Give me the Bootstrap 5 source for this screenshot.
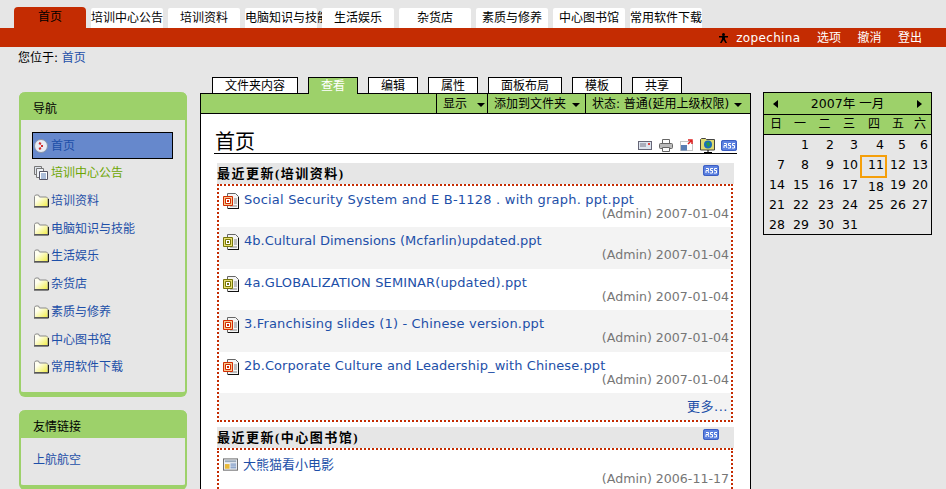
<!DOCTYPE html>
<html lang="en">
<head>
<meta charset="UTF-8" />
<title>首页</title>
<link href="https://cdn.jsdelivr.net/npm/bootstrap@5.3.0/dist/css/bootstrap.min.css" rel="stylesheet" />
<style>
html, body { height: 489px; overflow: hidden; }
body { background: #e6e6e6; color: #000; font: 13px/14px "DejaVu Sans", "Noto Sans CJK SC", sans-serif; }
a { color: #1d4fa8; text-decoration: none; }
svg { display: block; flex: none; }

.site-tabs { padding: 7px 0 0 14px; gap: 5px; height: 28px; align-items: flex-end; }
.site-tab { position: relative; width: 72px; height: 20px; background: #fff; color: #000; text-align: center; white-space: nowrap; line-height: 21px; font-size: 12px; border-radius: 2px 2px 0 0; }
.site-tab.on { height: 21px; background: #c42c02; border-radius: 4px 4px 0 0; }
.red-bar { height: 19px; background: #c42c02; padding-right: 24px; gap: 16.5px; align-items: center; color: #fff; }
.red-bar a { color: #fff; font-size: 12px; }
.red-bar a.user-name { letter-spacing: .35px; }
.crumb { height: 30px; padding: 4px 0 0 18px; font-size: 12px; }

.main-wrap { padding-left: 19px; align-items: flex-start; }
.left-col { width: 168px; margin-top: 15px; margin-right: 13px; flex: none; }
.side-box { border: 2px solid #9dd16a; border-top: 0; border-bottom-width: 5px; border-radius: 6px; background: #e6e6e6; margin-bottom: 13px; }
.side-head { height: 28px; background: #9dd16a; margin: 0 -2px; padding: 10px 0 0 14px; border-radius: 6px 6px 0 0; font-size: 12px; }
.side-body { padding: 12px 12px 10.5px 11px; }
.side-link { height: 27.75px; display: flex; align-items: center; gap: 2px; font-size: 12px; border: 1px solid transparent; }
.side-link.sel { background: #6688cc; border-color: #000; height: 27px; margin-bottom: .25px; }
.side-link.cur { color: #6ba500; }
.friend { padding: 15px 12px 18px; font-size: 12px; }
.stray { margin-left: 76px; margin-top: -13px; }

.mid-col { width: 551px; flex: none; margin-right: 12px; }
.view-tabs { padding-left: 12px; gap: 10px; height: 16px; position: relative; z-index: 1; }
.view-tab { height: 16px; border: 1px solid #000; border-bottom: 0; background: #fff; font-size: 12px; line-height: 16px; text-align: center; color: #000; }
.view-tab.on { background: #9dd16a; color: #fff; height: 17px; }
.tab-a { width: 86px; } .tab-b { width: 50px; } .tab-c { width: 74px; }
.action-bar { height: 21px; background: #9dd16a; border: 1px solid #000; justify-content: flex-end; font-size: 12px; }
.action-item { border-left: 1px solid #000; display: flex; align-items: center; justify-content: space-between; color: #000; padding: 0 2px 0 6px; }
.act-a { width: 51px; }
.act-b { width: 98px; padding-right: 5px; }
.act-c { width: 165px; padding-right: 8px; }
.drop { width: 0; height: 0; border: 4px solid transparent; border-top-color: #000; border-bottom: 0; margin-top: 2px; }
.content-pane { background: #fff; border-left: 1px solid #000; border-right: 1px solid #000; padding: 16px 13px 0; height: 400px; }
.page-title { height: 24px; border-bottom: 1px solid #000; font-size: 20px; line-height: 24px; padding-left: 1px; margin-bottom: 9px; position: relative; }
.doc-tools { position: absolute; right: 0; bottom: 0; height: 16px; align-items: center; }
.doc-tools svg { margin-left: 7px; }
.doc-tools svg:last-child { margin-left: 5px; }
.sec-head { height: 21px; background: #e6e6e6; margin: 0 3px; font: bold 13px/21px "Liberation Serif", "Noto Sans CJK SC", serif; letter-spacing: 1.5px; position: relative; }
.sec-head svg { position: absolute; right: 15px; top: 2px; }
.sec-box { border: 2px dotted #c42c02; margin: 0 4px 5px 3px; }
.feed-row { height: 41.4px; padding: 7px 2px 0 4px; }
.feed-row:nth-child(even) { background: #f3f3f3; }
.feed-row.first-low { padding-top: 8px; }
.feed-line { gap: 5px; height: 14px; align-items: flex-start; }
.feed-date { color: #767676; text-align: right; font-size: 12.6px; }
.ls-a { letter-spacing: .21px; }
.ls-c { letter-spacing: .13px; }
.ls-d { letter-spacing: .17px; }
.ls-e { letter-spacing: .08px; }
.more-row { height: 27px; background: #f3f3f3; text-align: right; padding: 7px 3px 0 0; letter-spacing: .5px; }

.cal-col { width: 169px; margin-top: 15px; border: 1px solid #000; flex: none; }
.cal-top { height: 22px; background: #9dd16a; border-bottom: 1px solid #000; padding: 0 9px; align-items: center; justify-content: space-between; font-size: 12.500px; }
.cal-arrow-l { width: 0; height: 0; border: 4px solid transparent; border-left: 0; border-right: 5px solid #000; }
.cal-arrow-r { width: 0; height: 0; border: 4px solid transparent; border-right: 0; border-left: 5px solid #000; }
.cal-week, .cal-days { display: grid; grid-template-columns: 24px 24px 25px 24px 26px 22px 22px; }
.cal-week { height: 20px; background: #9dd16a; border-bottom: 1px solid #000; font-size: 12px; line-height: 19px; text-align: center; }
.cal-days { grid-auto-rows: 20px; height: 99px; font-size: 12.500px; }
.cal-day { text-align: right; line-height: 20px; padding-right: 3px; position: relative; }
.cal-day.today::before { content: ""; position: absolute; inset: 0 0 -3px -1px; border: 2px solid #f59f0a; }
.cal-day.low { padding-top: 2px; }
</style>
</head>
<body>
<svg width="0" height="0" class="position-absolute">
  <defs>
    <linearGradient id="fold-fill" x1="0" y1="0" x2="1" y2="1"><stop offset=".3" stop-color="#fffff0"/><stop offset="1" stop-color="#f0ec40"/></linearGradient>
  </defs>
  <symbol id="ic-folder" viewBox="0 0 16 14"><path d="M1.500 12.500V2.500l1-1.500h3l1 2h7l1.500 1.500v8z" fill="url(#fold-fill)" stroke="#8a8a8a"/><path d="M1 13h14.500M15.500 5v8" stroke="#222"/></symbol>
  <symbol id="ic-ppt" viewBox="0 0 16 16"><path d="M4.500.5h8l3 3v12h-11z" fill="#f4f4f4" stroke="#666"/><path d="M15.500 4v12M5 15.500h11" stroke="#111"/><path d="M11 6h3M11 8h3M11 10h3M7 13h7" stroke="#888"/><path d="M.5 3.500h9v9h-9z" fill="#f7c98e" stroke="#d22c02"/><path d="M2.500 5.500h5v5h-5z" fill="#fff" stroke="#d22c02"/><path d="M4 7h2v2H4z" fill="#d22c02"/></symbol>
  <symbol id="ic-pptg" viewBox="0 0 16 16"><path d="M4.500.5h8l3 3v12h-11z" fill="#f4f4f4" stroke="#666"/><path d="M15.500 4v12M5 15.500h11" stroke="#111"/><path d="M11 6h3M11 8h3M11 10h3M7 13h7" stroke="#888"/><path d="M.5 3.500h9v9h-9z" fill="#e8e070" stroke="#77760a"/><path d="M2.500 5.500h5v5h-5z" fill="#fff" stroke="#77760a"/><path d="M4 7h2v2H4z" fill="#77760a"/></symbol>
  <symbol id="ic-rss" viewBox="0 0 16 11"><rect width="16" height="11" rx="2" fill="#5b80e0"/><rect x=".5" y=".5" width="15" height="10" rx="2" fill="none" stroke="#3b5cc0"/><path d="M3 3.500h2.500v2H3v2.500M5 6l1 2M10 3.500H7.500v2h2v2.500H7M14 3.500h-2.500v2h2v2.500H11" fill="none" stroke="#fff"/></symbol>
</svg>

<div class="site-tabs d-flex">
  <a class="site-tab on" href="#">首页</a>
  <a class="site-tab" href="#">培训中心公告</a>
  <a class="site-tab" href="#">培训资料</a>
  <a class="site-tab" href="#">电脑知识与技能</a>
  <a class="site-tab" href="#">生活娱乐</a>
  <a class="site-tab" href="#">杂货店</a>
  <a class="site-tab" href="#">素质与修养</a>
  <a class="site-tab" href="#">中心图书馆</a>
  <a class="site-tab" href="#">常用软件下载</a>
</div>
<div class="red-bar d-flex justify-content-end">
  <span class="d-flex align-items-center gap-2">
    <svg width="9" height="10" viewBox="0 0 9 10"><circle cx="4.500" cy="1.500" r="1.500"/><path d="M0 3h9v1.500H6V6l2 4H6.500l-2-3-2 3H1l2-4V4.500H0z"/></svg>
    <a href="#" class="user-name">zopechina</a>
  </span>
  <a href="#">选项</a>
  <a href="#">撤消</a>
  <a href="#">登出</a>
</div>
<div class="crumb">您位于: <a href="#">首页</a></div>

<div class="main-wrap d-flex">
  <div class="left-col">
    <div class="side-box">
      <div class="side-head">导航</div>
      <div class="side-body">
        <a class="side-link sel" href="#"><svg width="16" height="16" viewBox="0 0 16 16"><circle cx="8" cy="8" r="6.500" fill="#e8edf5" stroke="#8a95a8"/><path d="M6 5l2 1M8 8l2 0M6 11l2-1" stroke="#d22c2c" stroke-width="2"/></svg>首页</a>
        <a class="side-link cur" href="#"><svg width="16" height="16" viewBox="0 0 16 16"><path d="M1.500 1.500h7v8h-7z" fill="#dfe4ec" stroke="#777"/><path d="M3.500 3.500h7v9h-7z" fill="#eef1f6" stroke="#777"/><path d="M6.500 6.500h8v8h-8z" fill="#fff" stroke="#556"/><path d="M8 9h5M8 11h5M8 13h5" stroke="#5a7fb5"/></svg>培训中心公告</a>
        <a class="side-link" href="#"><svg width="16" height="14"><use href="#ic-folder"/></svg>培训资料</a>
        <a class="side-link" href="#"><svg width="16" height="14"><use href="#ic-folder"/></svg>电脑知识与技能</a>
        <a class="side-link" href="#"><svg width="16" height="14"><use href="#ic-folder"/></svg>生活娱乐</a>
        <a class="side-link" href="#"><svg width="16" height="14"><use href="#ic-folder"/></svg>杂货店</a>
        <a class="side-link" href="#"><svg width="16" height="14"><use href="#ic-folder"/></svg>素质与修养</a>
        <a class="side-link" href="#"><svg width="16" height="14"><use href="#ic-folder"/></svg>中心图书馆</a>
        <a class="side-link" href="#"><svg width="16" height="14"><use href="#ic-folder"/></svg>常用软件下载</a>
      </div>
    </div>
    <div class="side-box">
      <div class="side-head">友情链接</div>
      <div class="friend"><a href="#">上航航空</a></div>
    </div>
    <svg class="stray" width="16" height="16" viewBox="0 0 16 16"><path d="M.5.5h11l3 3v12H.5z" fill="#fff" stroke="#555"/><path d="M2 3h8v3H2z" fill="#5a7fb5"/></svg>
  </div>

  <div class="mid-col">
    <div class="view-tabs d-flex">
      <a class="view-tab tab-a" href="#">文件夹内容</a>
      <a class="view-tab on tab-b" href="#">查看</a>
      <a class="view-tab tab-b" href="#">编辑</a>
      <a class="view-tab tab-b" href="#">属性</a>
      <a class="view-tab tab-c" href="#">面板布局</a>
      <a class="view-tab tab-b" href="#">模板</a>
      <a class="view-tab tab-b" href="#">共享</a>
    </div>
    <div class="action-bar d-flex">
      <a class="action-item act-a" href="#">显示<span class="drop"></span></a>
      <a class="action-item act-b" href="#">添加到文件夹<span class="drop"></span></a>
      <a class="action-item act-c" href="#">状态: 普通(延用上级权限)<span class="drop"></span></a>
    </div>
    <div class="content-pane">
      <div class="page-title">首页
        <div class="doc-tools d-flex">
          <svg width="14" height="9" viewBox="0 0 14 9"><rect x=".5" y=".5" width="13" height="8" fill="#dde4ee" stroke="#667"/><path d="M2 3h6M2 5h6" stroke="#778"/><path d="M10 2h2v2h-2z" fill="#d44"/></svg>
          <svg width="14" height="13" viewBox="0 0 14 13"><path d="M3.500.5h7v4h-7z" fill="#fff" stroke="#666"/><rect x=".5" y="4.500" width="13" height="5" rx="1" fill="#bbb" stroke="#666"/><path d="M3.500 8.500h7v4h-7z" fill="#fff" stroke="#666"/></svg>
          <svg width="13" height="12" viewBox="0 0 13 12"><path d="M.5 2.500h12v9H.5z" fill="#fff" stroke="#888" stroke-dasharray="1 1"/><path d="M1 6h6v5.500H1z" fill="#5a7fb5"/><path d="M8 1h4v4M12 1L8 5" stroke="#d22" fill="none" stroke-width="1.500"/></svg>
          <svg width="16" height="16" viewBox="0 0 16 16"><path d="M.5 13V2.500l1-1h4l1 1h8v10.500z" fill="#dfdb70" stroke="#444"/><circle cx="8" cy="7.500" r="4" fill="#1a6fb8"/><path d="M6 6l3-1 1 3-2 2z" fill="#2b9e3f"/><path d="M8 13v2M4 15.500h8" stroke="#000"/></svg>
          <svg width="16" height="11"><use href="#ic-rss"/></svg>
        </div>
      </div>
      <div class="sec-head">最近更新(培训资料)<svg width="16" height="11"><use href="#ic-rss"/></svg></div>
      <div class="sec-box">
        <div class="feed-row">
          <div class="feed-line d-flex"><svg width="16" height="16"><use href="#ic-ppt"/></svg><a class="ls-a" href="#">Social Security System and E B-1128 . with graph. ppt.ppt</a></div>
          <div class="feed-date">(Admin) 2007-01-04</div>
        </div>
        <div class="feed-row">
          <div class="feed-line d-flex"><svg width="16" height="16"><use href="#ic-pptg"/></svg><a href="#">4b.Cultural Dimensions (Mcfarlin)updated.ppt</a></div>
          <div class="feed-date">(Admin) 2007-01-04</div>
        </div>
        <div class="feed-row">
          <div class="feed-line d-flex"><svg width="16" height="16"><use href="#ic-pptg"/></svg><a class="ls-c" href="#">4a.GLOBALIZATION SEMINAR(updated).ppt</a></div>
          <div class="feed-date">(Admin) 2007-01-04</div>
        </div>
        <div class="feed-row">
          <div class="feed-line d-flex"><svg width="16" height="16"><use href="#ic-ppt"/></svg><a class="ls-d" href="#">3.Franchising slides (1) - Chinese version.ppt</a></div>
          <div class="feed-date">(Admin) 2007-01-04</div>
        </div>
        <div class="feed-row">
          <div class="feed-line d-flex"><svg width="16" height="16"><use href="#ic-ppt"/></svg><a class="ls-e" href="#">2b.Corporate Culture and Leadership_with Chinese.ppt</a></div>
          <div class="feed-date">(Admin) 2007-01-04</div>
        </div>
        <div class="more-row"><a href="#">更多...</a></div>
      </div>
      <div class="sec-head">最近更新(中心图书馆)<svg width="16" height="11"><use href="#ic-rss"/></svg></div>
      <div class="sec-box">
        <div class="feed-row first-low">
          <div class="feed-line d-flex"><svg width="15" height="14" viewBox="0 0 16 14"><rect x=".5" y=".5" width="15" height="12" fill="#eef1f6" stroke="#666"/><path d="M2 2h12v2H2z" fill="#9ab"/><path d="M2 6h5v5H2z" fill="#e8b93a"/><path d="M8 6h6M8 8h6M8 10h6" stroke="#5a7fb5"/></svg><a href="#">大熊猫看小电影</a></div>
          <div class="feed-date">(Admin) 2006-11-17</div>
        </div>
      </div>
    </div>
  </div>

  <div class="cal-col">
    <div class="cal-top d-flex"><span class="cal-arrow-l"></span><span>2007年 一月</span><span class="cal-arrow-r"></span></div>
    <div class="cal-week"><span>日</span><span>一</span><span>二</span><span>三</span><span>四</span><span>五</span><span>六</span></div>
    <div class="cal-days">
      <span></span><span class="cal-day">1</span><span class="cal-day">2</span><span class="cal-day">3</span><span class="cal-day">4</span><span class="cal-day">5</span><span class="cal-day">6</span>
      <span class="cal-day">7</span><span class="cal-day">8</span><span class="cal-day">9</span><span class="cal-day">10</span><span class="cal-day today">11</span><span class="cal-day">12</span><span class="cal-day">13</span>
      <span class="cal-day">14</span><span class="cal-day">15</span><span class="cal-day">16</span><span class="cal-day">17</span><span class="cal-day low">18</span><span class="cal-day">19</span><span class="cal-day">20</span>
      <span class="cal-day">21</span><span class="cal-day">22</span><span class="cal-day">23</span><span class="cal-day">24</span><span class="cal-day">25</span><span class="cal-day">26</span><span class="cal-day">27</span>
      <span class="cal-day">28</span><span class="cal-day">29</span><span class="cal-day">30</span><span class="cal-day">31</span>
    </div>
  </div>
</div>
<script src="https://cdn.jsdelivr.net/npm/bootstrap@5.3.0/dist/js/bootstrap.bundle.min.js"></script>
</body>
</html>
